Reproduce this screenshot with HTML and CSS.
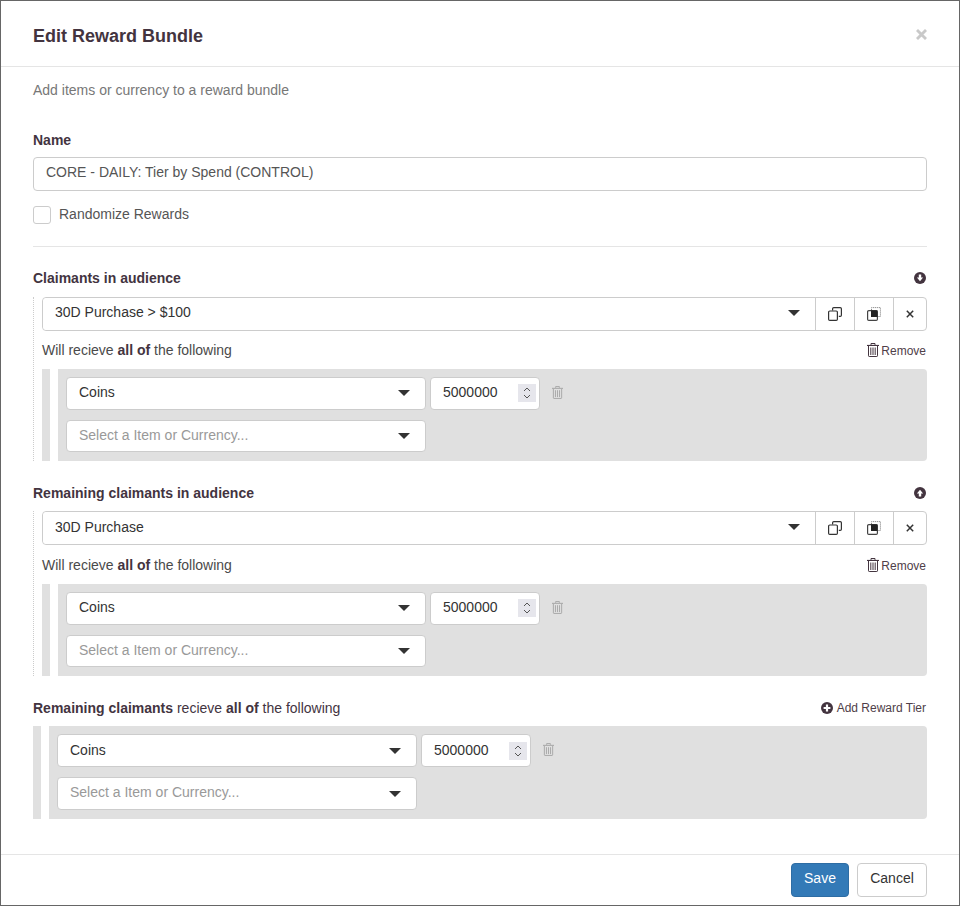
FILE: index.html
```html
<!DOCTYPE html>
<html lang="en">
<head>
<meta charset="utf-8">
<title>Edit Reward Bundle</title>
<link rel="stylesheet" href="styles.css">
</head>
<body>
<svg class="defs" width="0" height="0" aria-hidden="true">
  <defs>
    <symbol id="caret" viewBox="0 0 12 6"><path d="M0 0h12L6 6z" fill="#333"/></symbol>
    <symbol id="trash" viewBox="0 0 12 14"><path fill="none" stroke="currentColor" stroke-width="1" d="M4 1.900V.5h4v1.400"/><path fill="currentColor" d="M0 1.900h12v1.100H0z"/><path fill="none" stroke="currentColor" stroke-width="1" d="M1.500 3v9.800a.7.7 0 0 0 .7.7h7.600a.7.7 0 0 0 .7-.7V3M3.800 4.500v7.500M6 4.500v7.500M8.200 4.500v7.500"/></symbol>
    <symbol id="copy" viewBox="0 0 14 14"><path fill="none" stroke="#333" stroke-width="1.200" d="M4.600 3.200V1.800a1.200 1.200 0 0 1 1.200-1.200h6.400a1.200 1.200 0 0 1 1.200 1.200v6.400a1.200 1.200 0 0 1-1.200 1.200h-1.400M1.800 4h6.400a1.200 1.200 0 0 1 1.200 1.200v7a1.200 1.200 0 0 1-1.200 1.200H1.800a1.200 1.200 0 0 1-1.200-1.200v-7A1.200 1.200 0 0 1 1.800 4z"/></symbol>
    <symbol id="paste" viewBox="0 0 14 14"><path fill="none" stroke="#888" stroke-width="1" stroke-dasharray="1.200 .8" d="M4.500 3V.6h8.900v8.900h-2.600"/><path fill="#fff" stroke="#444" stroke-width="1.200" d="M1.800 3.600h7.400a1.200 1.200 0 0 1 1.200 1.200v7.400a1.200 1.200 0 0 1-1.200 1.200H1.800a1.200 1.200 0 0 1-1.200-1.200V4.800a1.200 1.200 0 0 1 1.200-1.200z"/><path fill="#222" d="M4 3.400h6.400V10H4z"/></symbol>
    <symbol id="close" viewBox="0 0 8 8"><path stroke="#333" stroke-width="1.500" d="M.8.800l6.400 6.400M7.200.8L.8 7.200"/></symbol>
    <symbol id="down" viewBox="0 0 12 12"><circle cx="6" cy="6" r="6" fill="#43343f"/><path fill="#fff" d="M4.800 2.600h2.400v3h1.900L6 9.200 2.900 5.600h1.900z"/></symbol>
    <symbol id="up" viewBox="0 0 12 12"><circle cx="6" cy="6" r="6" fill="#43343f"/><path fill="#fff" d="M4.800 9.400h2.400v-3h1.900L6 2.800 2.900 6.400h1.900z"/></symbol>
    <symbol id="plus" viewBox="0 0 12 12"><circle cx="6" cy="6" r="6" fill="#43343f"/><path fill="#fff" d="M4.900 2.600h2.200v2.300h2.300v2.200H7.100v2.300H4.900V7.100H2.600V4.900h2.300z"/></symbol>
    <symbol id="spin" viewBox="0 0 8 16"><path fill="none" stroke="#555" stroke-width="1" d="M1 6l3-3 3 3M1 10l3 3 3-3"/></symbol>
  </defs>
</svg>
<div class="modal">
  <header class="modal-header">
    <h1 class="title">Edit Reward Bundle</h1>
    <svg class="dismiss" viewBox="0 0 10 10"><path stroke="#c9c9c9" stroke-width="2.600" d="M.9.900l8.200 8.200M9.100.900L.9 9.100"/></svg>
  </header>
  <main class="modal-body">
    <p class="lead">Add items or currency to a reward bundle</p>
    <div class="label name-label">Name</div>
    <div class="field name-field">CORE - DAILY: Tier by Spend (CONTROL)</div>
    <div class="check-row"><span class="checkbox"></span><span class="check-text">Randomize Rewards</span></div>
    <hr class="rule">

    <div class="head-row first-head"><span class="label">Claimants in audience</span><svg class="circle"><use href="#down"/></svg></div>
    <section class="tier">
      <div class="audience">
        <div class="aud-select"><span class="val">30D Purchase &gt; $100</span><svg class="caret"><use href="#caret"/></svg></div>
        <div class="aud-btn"><svg class="ico14"><use href="#copy"/></svg></div>
        <div class="aud-btn"><svg class="ico14"><use href="#paste"/></svg></div>
        <div class="aud-btn last"><svg class="ico8"><use href="#close"/></svg></div>
      </div>
      <div class="will-row"><span>Will recieve <b>all of</b> the following</span><span class="remove"><svg class="trash-sm"><use href="#trash"/></svg>Remove</span></div>
      <div class="rewards">
        <div class="stripe"></div>
        <div class="panel">
          <div class="reward-row">
            <div class="pick"><span class="val">Coins</span><svg class="caret"><use href="#caret"/></svg></div>
            <div class="qty"><span class="val">5000000</span><span class="spinner"><svg class="spin"><use href="#spin"/></svg></span></div>
            <svg class="trash-grey"><use href="#trash"/></svg>
          </div>
          <div class="reward-row">
            <div class="pick placeholder"><span class="val">Select a Item or Currency...</span><svg class="caret"><use href="#caret"/></svg></div>
          </div>
        </div>
      </div>
    </section>

    <div class="head-row next-head"><span class="label">Remaining claimants in audience</span><svg class="circle"><use href="#up"/></svg></div>
    <section class="tier tier-second">
      <div class="audience">
        <div class="aud-select"><span class="val">30D Purchase</span><svg class="caret"><use href="#caret"/></svg></div>
        <div class="aud-btn"><svg class="ico14"><use href="#copy"/></svg></div>
        <div class="aud-btn"><svg class="ico14"><use href="#paste"/></svg></div>
        <div class="aud-btn last"><svg class="ico8"><use href="#close"/></svg></div>
      </div>
      <div class="will-row"><span>Will recieve <b>all of</b> the following</span><span class="remove"><svg class="trash-sm"><use href="#trash"/></svg>Remove</span></div>
      <div class="rewards">
        <div class="stripe"></div>
        <div class="panel">
          <div class="reward-row">
            <div class="pick"><span class="val">Coins</span><svg class="caret"><use href="#caret"/></svg></div>
            <div class="qty"><span class="val">5000000</span><span class="spinner"><svg class="spin"><use href="#spin"/></svg></span></div>
            <svg class="trash-grey"><use href="#trash"/></svg>
          </div>
          <div class="reward-row">
            <div class="pick placeholder"><span class="val">Select a Item or Currency...</span><svg class="caret"><use href="#caret"/></svg></div>
          </div>
        </div>
      </div>
    </section>

    <div class="head-row next-head"><span class="plain"><b>Remaining claimants</b> recieve <b>all of</b> the following</span><span class="add"><svg class="circle"><use href="#plus"/></svg>Add Reward Tier</span></div>
    <div class="rewards final">
      <div class="stripe"></div>
      <div class="panel">
        <div class="reward-row">
          <div class="pick"><span class="val">Coins</span><svg class="caret"><use href="#caret"/></svg></div>
          <div class="qty"><span class="val">5000000</span><span class="spinner"><svg class="spin"><use href="#spin"/></svg></span></div>
          <svg class="trash-grey"><use href="#trash"/></svg>
        </div>
        <div class="reward-row">
          <div class="pick placeholder"><span class="val">Select a Item or Currency...</span><svg class="caret"><use href="#caret"/></svg></div>
        </div>
      </div>
    </div>
  </main>
  <footer class="modal-footer">
    <div class="btn save"><span class="val">Save</span></div>
    <div class="btn cancel"><span class="val">Cancel</span></div>
  </footer>
</div>
</body>
</html>
```
FILE: styles.css
```css
* { box-sizing: border-box; }
html, body { margin: 0; padding: 0; background: #fff; }
body {
  font-family: "Liberation Sans", Arial, sans-serif;
  font-size: 14px;
  line-height: 20px;
  color: #4a4a4a;
}
.defs { position: absolute; }
.val { margin-bottom: 3px; }
.modal {
  width: 960px;
  height: 906px;
  border: 1px solid #666;
  background: #fff;
  display: flex;
  flex-direction: column;
}
.modal-header {
  height: 66px;
  flex: none;
  border-bottom: 1px solid #e5e5e5;
  padding: 0 32px;
  display: flex;
  align-items: center;
  justify-content: space-between;
}
.title {
  margin: 4px 0 0;
  font-size: 18px;
  font-weight: bold;
  line-height: 20px;
  color: #43343f;
}
.dismiss { width: 11px; height: 11px; margin-top: 2px; }
.modal-body { flex: 1; padding: 13px 32px 0; }
.lead { margin: 0; color: #777; height: 20px; }
.label { font-weight: bold; color: #43343f; }
.name-label { margin-top: 30px; }
.field, .aud-select, .pick, .qty { background: #fff; }
.name-field {
  margin-top: 7px;
  height: 34px;
  border: 1px solid #ccc;
  border-radius: 4px;
  padding: 4px 12px;
  color: #555;
}
.check-row { margin-top: 15px; height: 18px; display: flex; align-items: center; gap: 8px; color: #555; }
.check-text { margin-bottom: 2px; }
.checkbox { width: 18px; height: 18px; border: 1px solid #ccc; border-radius: 3px; }
.rule { margin: 22px 0 0; border: 0; border-top: 1px solid #e5e5e5; }
.head-row { display: flex; justify-content: space-between; align-items: center; height: 20px; }
.first-head { margin-top: 21px; }
.next-head { margin-top: 22px; }
.plain { color: #43343f; }
.circle { width: 12px; height: 12px; margin-right: 1px; }
.tier { margin-top: 9px; padding-left: 8px; border-left: 1px dotted #ccc; }
.tier-second { margin-top: 8px; }
.tier-second .will-row { margin-top: 10px; }
.tier-second .aud-select .val { margin-bottom: 1px; }
.audience {
  display: flex;
  height: 34px;
  border: 1px solid #ccc;
  border-radius: 4px;
}
.aud-select {
  flex: 1;
  display: flex;
  align-items: center;
  justify-content: space-between;
  padding: 0 15px 2px 12px;
  color: #333;
  border-radius: 4px 0 0 4px;
}
.aud-btn {
  width: 39px;
  border-left: 1px solid #ccc;
  display: flex;
  align-items: center;
  justify-content: center;
}
.aud-btn.last { width: 33px; }
.caret { width: 12px; height: 6px; }
.ico14 { width: 14px; height: 14px; }
.ico8 { width: 8px; height: 8px; }
.will-row { display: flex; justify-content: space-between; align-items: center; height: 20px; margin-top: 9px; color: #4a4a4a; }
.will-row b { color: #43343f; }
.remove { font-size: 12px; color: #4f4049; display: flex; align-items: center; gap: 2px; margin: 2px 1px 0 0; }
.trash-sm { width: 12px; height: 14px; color: #43343f; margin-top: -2px; }
.rewards { display: flex; gap: 8px; margin-top: 9px; height: 92px; }
.rewards.final { margin-top: 8px; height: 93px; }
.stripe { width: 8px; background: #e0e0e0; flex: none; }
.panel {
  flex: 1;
  background: #e0e0e0;
  border-radius: 0 4px 4px 0;
  padding: 8px;
  display: flex;
  flex-direction: column;
  gap: 10px;
}
.reward-row { display: flex; align-items: flex-start; height: 32.5px; gap: 4px; }
.final .reward-row { height: 33px; }
.final .pick .val, .final .qty .val { margin-bottom: 1px; }
.pick {
  width: 360px;
  height: 100%;
  border: 1px solid #ccc;
  border-radius: 4px;
  padding: 0 15px 0 12px;
  display: flex;
  align-items: center;
  justify-content: space-between;
  color: #333;
}
.placeholder { color: #999; }
.placeholder .val, .final .placeholder .val { margin-bottom: 1px; }
.final .placeholder .val { margin-bottom: 3px; }
.qty {
  width: 110px;
  height: 100%;
  border: 1px solid #ccc;
  border-radius: 4px;
  padding: 0 3px 0 12px;
  display: flex;
  align-items: center;
  justify-content: space-between;
  color: #333;
}
.spinner { width: 18px; height: 18px; background: #e6e6ec; display: flex; align-items: center; justify-content: center; }
.spin { width: 8px; height: 16px; }
.trash-grey { width: 11px; height: 13px; margin: 9px 0 0 8px; color: #a5a5a5; }
.add { font-size: 12px; color: #4f4049; display: flex; align-items: center; gap: 4px; margin-right: 1px; }
.add .circle { margin: 0; }
.modal-footer {
  height: 51px;
  flex: none;
  border-top: 1px solid #e5e5e5;
  padding: 8px 32px 0 0;
  display: flex;
  justify-content: flex-end;
  gap: 8px;
}
.btn { height: 34px; border-radius: 4px; border: 1px solid; display: flex; align-items: center; justify-content: center; }
.btn .val { margin-bottom: 4px; }
.save { width: 58px; background: #337ab7; border-color: #2e6da4; color: #fff; }
.cancel { width: 70px; background: #fff; border-color: #ccc; color: #333; }
```
